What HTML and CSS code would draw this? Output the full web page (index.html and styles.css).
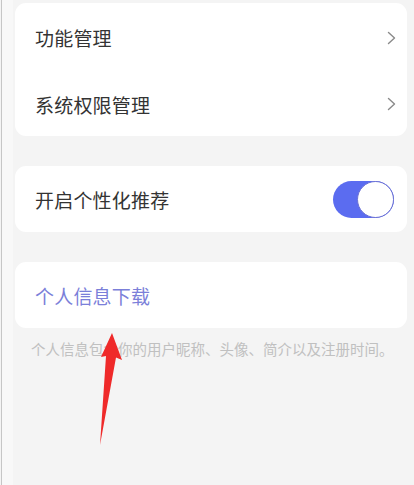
FILE: index.html
```html
<!DOCTYPE html>
<html lang="zh-CN">
<head>
<meta charset="utf-8">
<title>设置</title>
<link rel="stylesheet" href="styles.css">
</head>
<body>
<div class="page">
  <section class="card">
    <div class="row row-first">
      <span class="label">功能管理</span>
      <svg class="chev" viewBox="0 0 9 14" width="9" height="14"><path d="M1.5 1.5 L7.5 7 L1.5 12.5" fill="none" stroke="#8a8a8a" stroke-width="1.4" stroke-linecap="round" stroke-linejoin="round"/></svg>
    </div>
    <div class="row row-second">
      <span class="label">系统权限管理</span>
      <svg class="chev" viewBox="0 0 9 14" width="9" height="14"><path d="M1.5 1.5 L7.5 7 L1.5 12.5" fill="none" stroke="#8a8a8a" stroke-width="1.4" stroke-linecap="round" stroke-linejoin="round"/></svg>
    </div>
  </section>

  <section class="card card-single">
    <div class="row row-single">
      <span class="label">开启个性化推荐</span>
      <span class="toggle"><span class="knob"></span></span>
    </div>
  </section>

  <section class="card card-single">
    <div class="row row-single">
      <span class="label label-link">个人信息下载</span>
    </div>
  </section>
  <p class="caption">个人信息包含你的用户昵称、头像、简介以及注册时间。</p>

  <svg class="arrow" viewBox="0 0 414 485" width="414" height="485">
    <polygon points="112,333 122,360 116,357.5 100,445 106,356 101,357" fill="#ef2a2a"/>
  </svg>
</div>
</body>
</html>
```

FILE: styles.css
```css
html, body {
  margin: 0;
  padding: 0;
  background: #f4f4f4;
}

body {
  font-family: "Noto Sans CJK SC", "Noto Sans", sans-serif;
  width: 414px;
  height: 485px;
  overflow: hidden;
}

.page {
  position: relative;
  margin-left: 1px;
  border-left: 1px solid #c6c6c6;
  padding: 3px 7px 0 13px;
  height: 485px;
  box-sizing: border-box;
  background: linear-gradient(to right, #f8f8f8 11px, #f4f4f4 11px);
}

.card {
  background: #ffffff;
  border-radius: 11px;
  margin-bottom: 30px;
}

.row {
  display: flex;
  align-items: center;
  justify-content: space-between;
  padding: 0 11px 0 20px;
}

.row-first {
  height: 69px;
}

.row-second {
  height: 64px;
}

.card-single .row-single {
  height: 66px;
  padding-right: 13px;
}

.label {
  font-size: 19px;
  color: #333333;
  letter-spacing: 0.2px;
}

.label-link {
  color: #7b7fd9;
}

.chev {
  display: block;
}

.toggle {
  width: 61px;
  height: 37px;
  border-radius: 19px;
  background: #5b6cf0;
  display: flex;
  justify-content: flex-end;
  align-items: center;
}

.knob {
  width: 35px;
  height: 35px;
  border-radius: 50%;
  background: #ffffff;
  border: 1px solid #6a70d4;
}

.caption {
  margin: -19px 0 0 16px;
  font-size: 14.5px;
  line-height: 20px;
  color: #c0c0c0;
  white-space: nowrap;
}

.arrow {
  position: absolute;
  left: -2px;
  top: 0;
  pointer-events: none;
}
```
